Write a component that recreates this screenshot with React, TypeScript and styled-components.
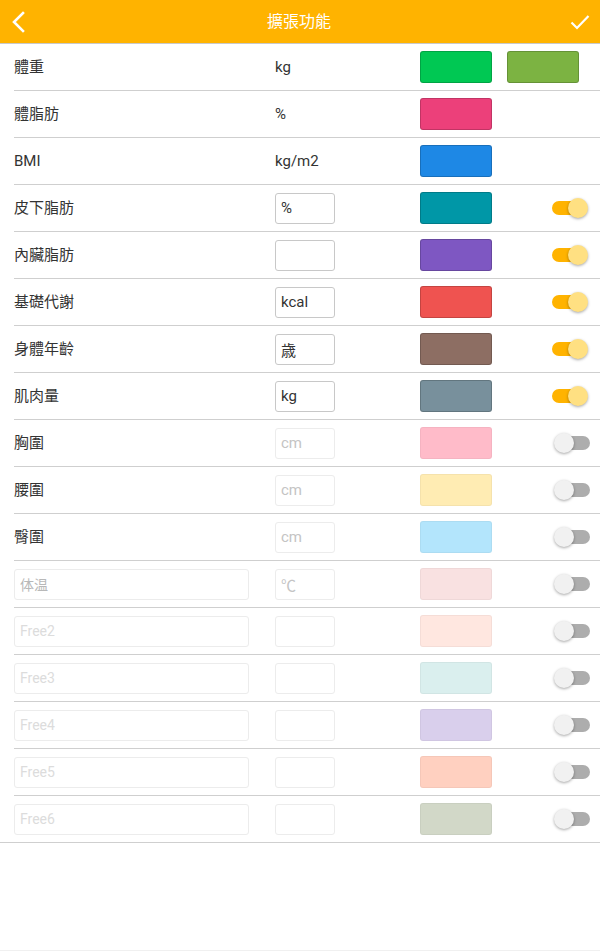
import { createGlobalStyle, styled } from "styled-components";

type Field = {
	label: string;
	unit?: string;
	unitMode: "text" | "input" | "off";
	colors: string[];
	toggle?: boolean;
	free?: boolean;
	faded?: boolean;
};

const fields: Field[] = [
	{ label: "體重", unit: "kg", unitMode: "text", colors: ["#00c853", "#7cb342"] },
	{ label: "體脂肪", unit: "%", unitMode: "text", colors: ["#ec407a"] },
	{ label: "BMI", unit: "kg/m2", unitMode: "text", colors: ["#1e88e5"] },
	{ label: "皮下脂肪", unit: "%", unitMode: "input", colors: ["#0097a7"], toggle: true },
	{ label: "內臟脂肪", unit: "", unitMode: "input", colors: ["#7e57c2"], toggle: true },
	{ label: "基礎代謝", unit: "kcal", unitMode: "input", colors: ["#ef5350"], toggle: true },
	{ label: "身體年齡", unit: "歳", unitMode: "input", colors: ["#8d6e63"], toggle: true },
	{ label: "肌肉量", unit: "kg", unitMode: "input", colors: ["#78909c"], toggle: true },
	{ label: "胸圍", unit: "cm", unitMode: "off", colors: ["#ffbbc9"], toggle: false },
	{ label: "腰圍", unit: "cm", unitMode: "off", colors: ["#ffecb3"], toggle: false },
	{ label: "臀圍", unit: "cm", unitMode: "off", colors: ["#b3e5fc"], toggle: false },
	{ label: "体温", unit: "℃", unitMode: "off", colors: ["#f9e1e1"], toggle: false, free: true },
	{ label: "Free2", unit: "", unitMode: "off", colors: ["#ffe7e0"], toggle: false, free: true, faded: true },
	{ label: "Free3", unit: "", unitMode: "off", colors: ["#daefee"], toggle: false, free: true, faded: true },
	{ label: "Free4", unit: "", unitMode: "off", colors: ["#d9cfec"], toggle: false, free: true, faded: true },
	{ label: "Free5", unit: "", unitMode: "off", colors: ["#ffd0c0"], toggle: false, free: true, faded: true },
	{ label: "Free6", unit: "", unitMode: "off", colors: ["#d2d8c8"], toggle: false, free: true, faded: true },
];

export default function App() {
	return (
		<>
			<GlobalStyle />
			<Page>
				<Header>
					<IconButton aria-label="back">
						<svg width="14" height="22" viewBox="0 0 14 22">
							<path d="M12 2 L3 11 L12 20" fill="none" stroke="#fff" strokeWidth="2.6" strokeLinecap="square" />
						</svg>
					</IconButton>
					<Title>擴張功能</Title>
					<IconButton aria-label="save">
						<svg width="20" height="16" viewBox="0 0 20 16">
							<path d="M1.5 8.5 L7 14 L18.5 2" fill="none" stroke="#fff" strokeWidth="2.2" />
						</svg>
					</IconButton>
				</Header>
				<List>
					{fields.map((f, i) => (
						<Row key={f.label} $last={i === fields.length - 1}>
							<NameCell>
								{f.free ? (
									<NameInput $faded={f.faded}>{f.label}</NameInput>
								) : (
									<Label>{f.label}</Label>
								)}
							</NameCell>
							<UnitCell>
								{f.unitMode === "text" && <UnitText>{f.unit}</UnitText>}
								{f.unitMode !== "text" && (
									<UnitBox $off={f.unitMode === "off"}>{f.unit}</UnitBox>
								)}
							</UnitCell>
							<SwatchCell>
								{f.colors.map((c) => (
									<Swatch key={c} $color={c} $soft={f.toggle === false} />
								))}
							</SwatchCell>
							<ToggleCell>
								{f.toggle !== undefined && (
									<Toggle $on={f.toggle}>
										<Knob $on={f.toggle} />
									</Toggle>
								)}
							</ToggleCell>
						</Row>
					))}
				</List>
				<Spacer />
				<Footer />
			</Page>
		</>
	);
}

//#region Styled Components
const GlobalStyle = createGlobalStyle`
  html, body {
    margin: 0;
    padding: 0;
    background: #fff;
  }
  body {
    font-family: Roboto, "Noto Sans CJK TC", "Noto Sans", sans-serif;
    color: #333;
  }
`;

const Page = styled.div`
  display: flex;
  flex-direction: column;
  height: 952px;
`;

const Header = styled.header`
  height: 43px;
  background: #ffb300;
  border-bottom: 1px solid #c9c9c9;
  display: flex;
  align-items: center;
  justify-content: space-between;
  padding: 0 9px 0 7px;
`;

const IconButton = styled.div`
  display: flex;
  align-items: center;
  justify-content: center;
  width: 22px;
  height: 24px;
`;

const Title = styled.h1`
  margin: 0;
  font-size: 16px;
  font-weight: 400;
  line-height: 20px;
  color: #fff;
`;

const List = styled.div`
  display: flex;
  flex-direction: column;
`;

const Row = styled.div<{ $last: boolean }>`
  height: 46px;
  display: grid;
  grid-template-columns: 261px 145px 1fr auto;
  align-items: center;
  border-bottom: 1px solid #cfcfcf;
  margin-left: ${({ $last }) => ($last ? "0" : "14px")};
  padding-left: ${({ $last }) => ($last ? "14px" : "0")};
`;

const NameCell = styled.div`
  display: flex;
  align-items: center;
`;

const Label = styled.span`
  font-size: 15px;
  line-height: 18px;
  color: #333;
`;

const NameInput = styled.div<{ $faded?: boolean }>`
  width: 235px;
  height: 31px;
  box-sizing: border-box;
  border: 1px solid #ececec;
  border-radius: 3px;
  padding: 0 5px;
  display: flex;
  align-items: center;
  font-size: 14px;
  color: ${({ $faded }) => ($faded ? "#dcdcdc" : "#b8b8b8")};
`;

const UnitCell = styled.div`
  display: flex;
  align-items: center;
`;

const UnitText = styled.span`
  font-size: 15px;
  line-height: 18px;
  color: #333;
`;

const UnitBox = styled.div<{ $off: boolean }>`
  width: 60px;
  height: 31px;
  box-sizing: border-box;
  border: 1px solid ${({ $off }) => ($off ? "#ececec" : "#c8c8c8")};
  border-radius: 3px;
  padding: 0 5px;
  display: flex;
  align-items: center;
  font-size: 15px;
  color: ${({ $off }) => ($off ? "#c4c4c4" : "#333")};
`;

const SwatchCell = styled.div`
  display: flex;
  gap: 15px;
`;

const Swatch = styled.div<{ $color: string; $soft: boolean }>`
  width: 72px;
  height: 32px;
  box-sizing: border-box;
  border-radius: 3px;
  background: ${({ $color }) => $color};
  border: 1px solid ${({ $soft }) => ($soft ? "rgba(0,0,0,0.04)" : "rgba(0,0,0,0.18)")};
`;

const ToggleCell = styled.div`
  display: flex;
  justify-content: flex-end;
  padding-right: 10px;
`;

const Toggle = styled.div<{ $on: boolean }>`
  position: relative;
  width: 34px;
  height: 14px;
  border-radius: 7px;
  background: ${({ $on }) => ($on ? "#ffb300" : "#adadad")};
  margin-right: ${({ $on }) => ($on ? "4px" : "0")};
`;

const Knob = styled.div<{ $on: boolean }>`
  position: absolute;
  top: -3px;
  left: ${({ $on }) => ($on ? "16px" : "-2px")};
  width: 20px;
  height: 20px;
  border-radius: 50%;
  background: ${({ $on }) => ($on ? "#ffe082" : "#f1f1f1")};
  box-shadow: 0 1px 3px rgba(0, 0, 0, 0.35);
`;

const Spacer = styled.div`
  flex: 1;
`;

const Footer = styled.div`
  height: 1px;
  margin-bottom: 1px;
  background: #f0f0f0;
`;
//#endregion
